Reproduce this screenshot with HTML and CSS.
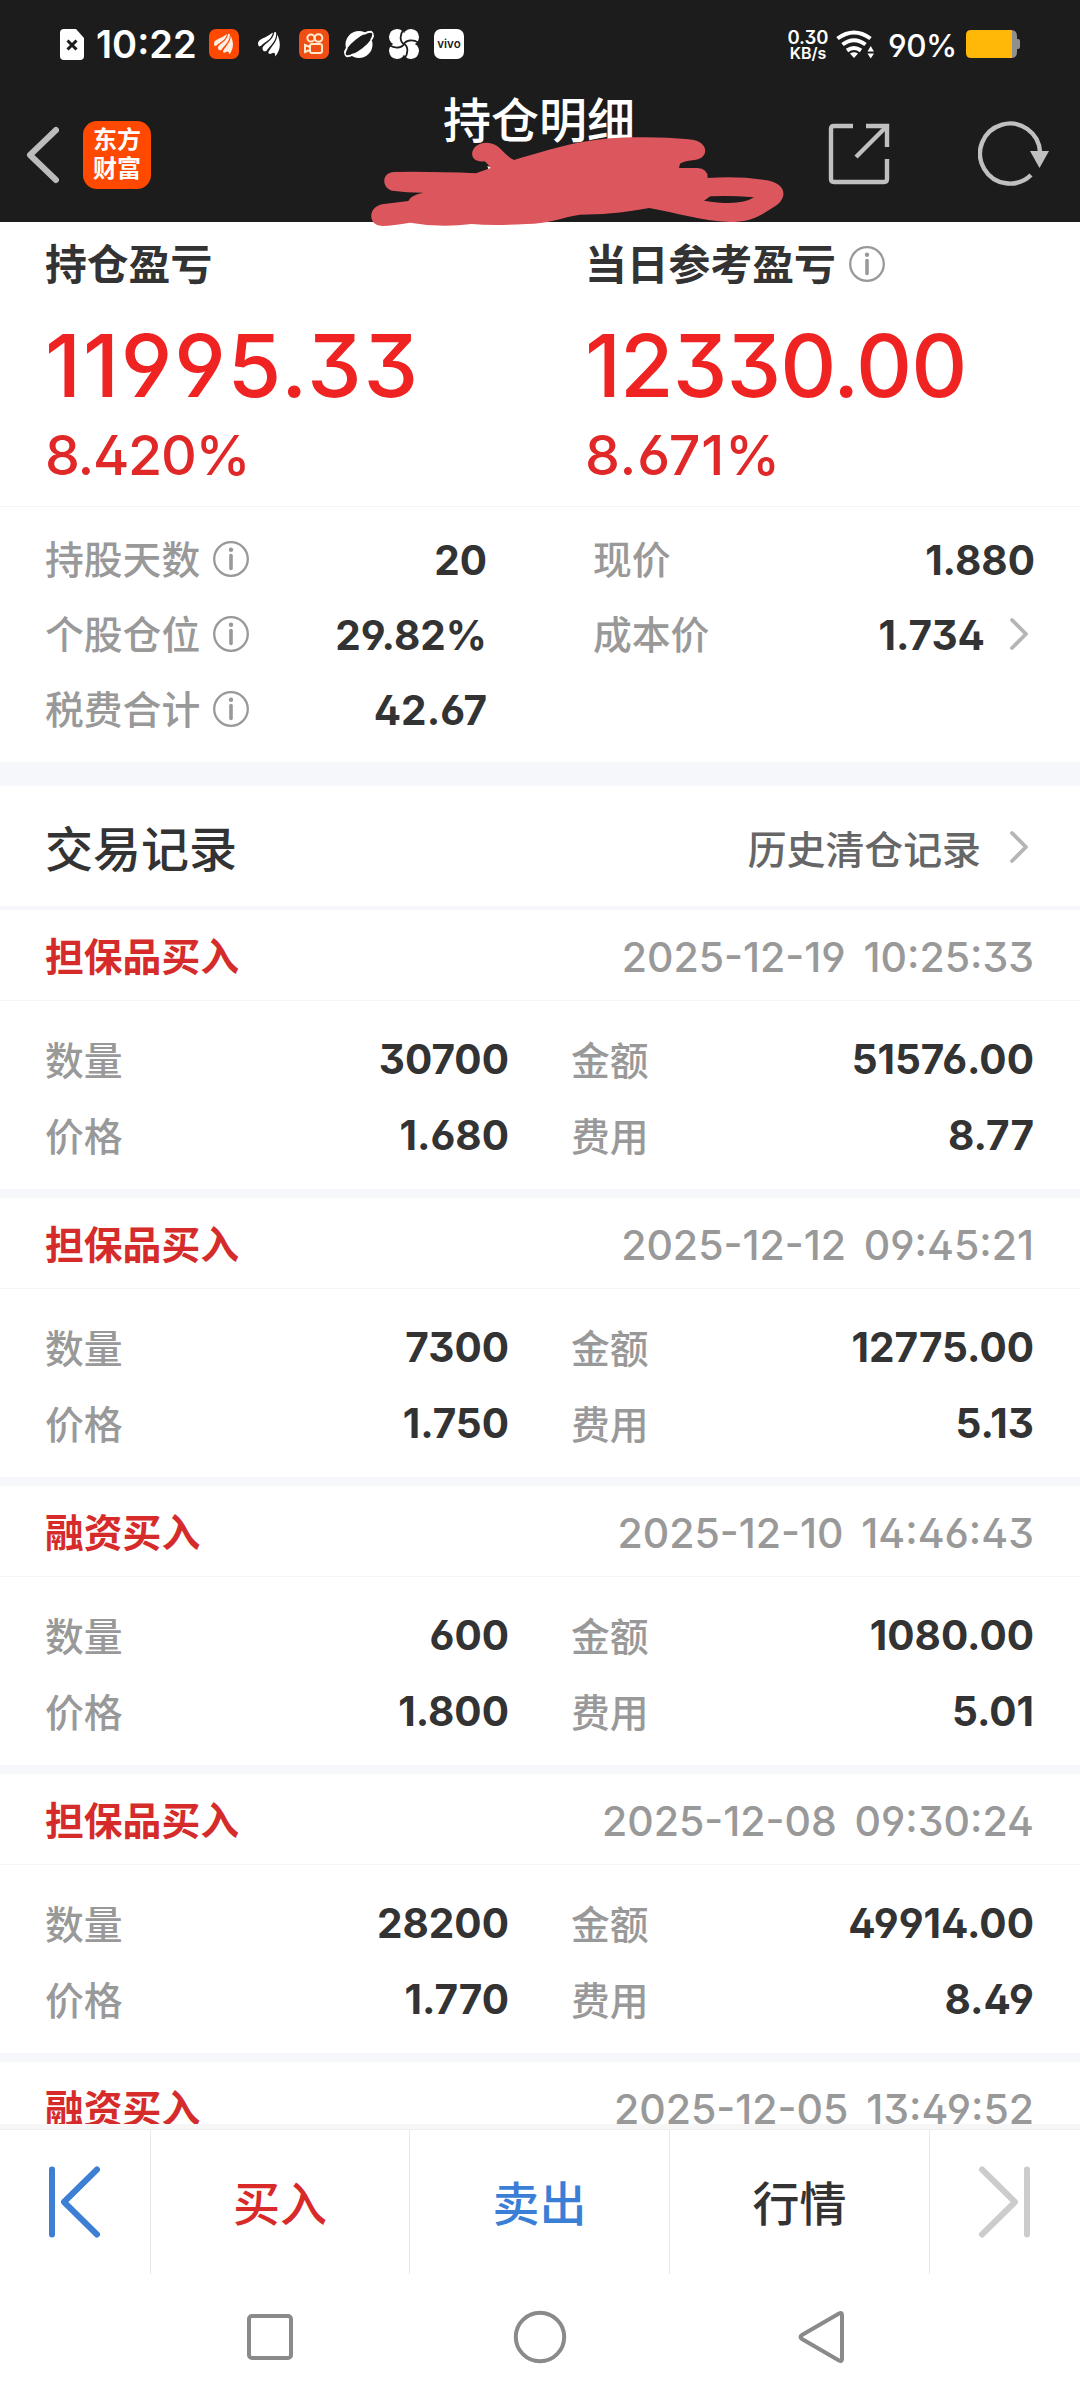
FILE: index.html
```html
<!DOCTYPE html>
<html lang="zh-CN">
<head>
<meta charset="utf-8">
<title>持仓明细</title>
<link rel="stylesheet" href="styles.css">
</head>
<body>
<svg class="defs" width="0" height="0">
  <symbol id="info" viewBox="0 0 36 36"><circle cx="18" cy="18" r="16.8" fill="none" stroke="#999" stroke-width="2.3"/><circle cx="18" cy="8.8" r="2.2" fill="#999"/><path d="M18 14.5V27.5" stroke="#999" stroke-width="3.6" stroke-linecap="round"/></symbol>
  <symbol id="chev" viewBox="0 0 20 34"><path d="M3 3L17 17L3 31" fill="none" stroke="#b5b5b5" stroke-width="3.8" stroke-linecap="round" stroke-linejoin="round"/></symbol>
  <symbol id="wing" viewBox="0 0 24 26"><path d="M0 12C1 7 8 7 14 2C15 1 16 1 15 3C12 10 8 10 4 14C1 17 0 15 0 12ZM5 16C9 11 15 10 17 1C18 0 19 1 19 2C19 11 12 15 9 20C6 22 4 19 5 16ZM11 21C15 14 20 11 20 3C23 9 25 18 18 26C18 22 17 21 14 23C12 24 10 23 11 21Z" fill="currentColor"/></symbol>
</svg>

<header class="top">
  <div class="status">
    <svg class="ic-sim" width="24" height="31" viewBox="0 0 24 31"><path d="M4 0H16L24 9V27Q24 31 20 31H4Q0 31 0 27V4Q0 0 4 0Z" fill="#fff"/><path d="M7.5 11.500L16.500 20.500M16.500 11.500L7.500 20.500" stroke="#1c1c1c" stroke-width="3"/></svg>
    <span class="clock">10:22</span>
    <div class="apps">
      <span class="app app-orange"><svg width="20" height="22"><use href="#wing"/></svg></span>
      <span class="app"><svg width="23" height="26"><use href="#wing"/></svg></span>
      <span class="app app-kuai"><svg width="20" height="22" viewBox="0 0 20 22" fill="none" stroke="#ffeacb" stroke-width="2"><circle cx="7" cy="5" r="3.600"/><circle cx="14.500" cy="5" r="3.800"/><rect x="6" y="11" width="12" height="9" rx="2"/><path d="M6 14L1 12V19L6 17"/></svg></span>
      <svg class="app" viewBox="0 0 30 30"><circle cx="15" cy="15.500" r="13.500" fill="#fff"/><ellipse cx="15" cy="15" rx="16.800" ry="5.500" transform="rotate(-38 15 15)" fill="#1c1c1c"/><path d="M3 19Q-1 25 2 27Q5 28 10 25M27 11Q31 5 28 3Q25 2 20 5" fill="none" stroke="#fff" stroke-width="2"/></svg>
      <svg class="app" viewBox="0 0 30 30"><g fill="#fff"><circle cx="8" cy="8" r="8"/><circle cx="22" cy="8" r="8"/><circle cx="8" cy="22" r="8"/><circle cx="22" cy="22" r="8"/><rect x="7" y="7" width="16" height="16"/></g><path d="M15 15C11 13 10 6 15 0M15 15C17 11 24 10 30 14M15 15C19 17 20 24 15 30M15 15C13 19 6 20 0 16" fill="none" stroke="#1c1c1c" stroke-width="1.800"/></svg>
      <span class="app app-vivo">vivo</span>
    </div>
    <div class="net"><span class="net-n">0.30</span><span class="net-u">KB/s</span></div>
    <svg class="ic-wifi" width="38" height="29" viewBox="0 0 38 29"><g fill="none" stroke="#fff" stroke-width="4"><path d="M1.500 8.500Q18 -3.500 34.500 8.500"/><path d="M6.500 14.500Q18 6 29.500 14.500"/><path d="M11 20.500Q18 15.500 25 20.500"/></g><path d="M14 23.500Q18 21 22 23.500L18 28Z" fill="#fff"/><path d="M31.500 21.500L34.700 16L38 21.500ZM31.500 23.500H38L34.700 28.500Z" fill="#fff"/></svg>
    <span class="pct">90%</span>
    <svg class="ic-bat" width="54" height="28" viewBox="0 0 54 28"><path d="M40 0H45Q51 0 51 6V9H52Q54 9 54 11V17Q54 19 52 19H51V22Q51 28 45 28H40Z" fill="#8f8f8f"/><path d="M5 0H46V28H5Q0 28 0 23V5Q0 0 5 0Z" fill="#ffb807"/></svg>
  </div>
  <div class="nav">
    <svg class="ic-back" width="34" height="58" viewBox="0 0 34 58"><path d="M31 4L5 29L31 54" fill="none" stroke="#bcbcbc" stroke-width="6" stroke-linecap="round" stroke-linejoin="round"/></svg>
    <div class="logo">东方<br>财富</div>
    <h1 class="title">持仓明细</h1>
    <svg class="ic-share" width="62" height="62" viewBox="0 0 62 62" fill="none" stroke="#c0c0c0" stroke-width="4.400"><path d="M25 3H6Q3 3 3 6V56Q3 59 6 59H56Q59 59 59 56V36"/><path d="M38 3H59V24"/><path d="M28 34L58 4"/></svg>
    <svg class="ic-refresh" width="72" height="66" viewBox="0 0 72 66"><path d="M62 31A30 30 0 1 0 53 54" fill="none" stroke="#c0c0c0" stroke-width="4.400"/><path d="M52 30H71L61.500 47Z" fill="#c0c0c0"/></svg>
  </div>
  <svg class="scribble" width="430" height="145" viewBox="0 0 1290 435"><path d="M382 228L398 233L386 240Z" fill="#fff"/><path fill-rule="evenodd" fill="#dc575d" d="M348 250L392 234Q384 222 374 214C320 222 326 158 380 158C418 158 428 192 462 210C580 176 670 144 820 142Q910 140 985 148C1050 152 1048 206 1004 210Q976 212 960 221L957 234H1012Q1044 236 1043 264Q1130 258 1210 269C1290 278 1280 332 1240 352C1190 386 1160 396 1110 396C1020 392 950 368 868 354C780 370 720 374 660 374C600 384 560 402 500 402Q400 408 335 402Q240 414 150 398Q100 406 66 408C20 406 24 346 72 342L145 333Q150 316 190 308Q140 308 96 302C62 290 66 246 104 246Q210 244 348 250ZM1051 319L1032 332Q1140 350 1182 322Q1110 316 1051 319Z"/></svg>
</header>

<section class="pnl">
  <div class="pnl-col">
    <div class="pnl-name">持仓盈亏</div>
    <div class="pnl-big pnl-total">11995.33</div>
    <div class="pnl-pct pnl-pct-total">8.420%</div>
  </div>
  <div class="pnl-col">
    <div class="pnl-name">当日参考盈亏<svg class="info"><use href="#info"/></svg></div>
    <div class="pnl-big">12330.00</div>
    <div class="pnl-pct">8.671%</div>
  </div>
</section>

<section class="stats">
  <div class="stats-col">
    <div class="row"><span class="lab">持股天数</span><svg class="info"><use href="#info"/></svg><span class="val">20</span></div>
    <div class="row"><span class="lab">个股仓位</span><svg class="info"><use href="#info"/></svg><span class="val">29.82%</span></div>
    <div class="row"><span class="lab">税费合计</span><svg class="info"><use href="#info"/></svg><span class="val">42.67</span></div>
  </div>
  <div class="stats-col">
    <div class="row"><span class="lab">现价</span><span class="val">1.880</span></div>
    <div class="row"><span class="lab">成本价</span><span class="val">1.734</span><svg class="chev"><use href="#chev"/></svg></div>
  </div>
</section>

<section class="list-head">
  <h2 class="list-title">交易记录</h2>
  <span class="more">历史清仓记录</span><svg class="chev"><use href="#chev"/></svg>
</section>

<main class="records">
  <article class="rec">
    <div class="rec-head"><b class="kind">担保品买入</b><time class="date">2025-12-19&nbsp; 10:25:33</time></div>
    <div class="grid"><span class="lab">数量</span><span class="val">30700</span><span class="lab">金额</span><span class="val">51576.00</span><span class="lab">价格</span><span class="val">1.680</span><span class="lab">费用</span><span class="val">8.77</span></div>
  </article>
  <article class="rec">
    <div class="rec-head"><b class="kind">担保品买入</b><time class="date">2025-12-12&nbsp; 09:45:21</time></div>
    <div class="grid"><span class="lab">数量</span><span class="val">7300</span><span class="lab">金额</span><span class="val">12775.00</span><span class="lab">价格</span><span class="val">1.750</span><span class="lab">费用</span><span class="val">5.13</span></div>
  </article>
  <article class="rec">
    <div class="rec-head"><b class="kind">融资买入</b><time class="date">2025-12-10&nbsp; 14:46:43</time></div>
    <div class="grid"><span class="lab">数量</span><span class="val">600</span><span class="lab">金额</span><span class="val">1080.00</span><span class="lab">价格</span><span class="val">1.800</span><span class="lab">费用</span><span class="val">5.01</span></div>
  </article>
  <article class="rec">
    <div class="rec-head"><b class="kind">担保品买入</b><time class="date">2025-12-08&nbsp; 09:30:24</time></div>
    <div class="grid"><span class="lab">数量</span><span class="val">28200</span><span class="lab">金额</span><span class="val">49914.00</span><span class="lab">价格</span><span class="val">1.770</span><span class="lab">费用</span><span class="val">8.49</span></div>
  </article>
  <article class="rec">
    <div class="rec-head"><b class="kind">融资买入</b><time class="date">2025-12-05&nbsp; 13:49:52</time></div>
  </article>
</main>

<footer class="bar">
  <div class="cell cell-icon"><svg width="54" height="72" viewBox="0 0 54 72" fill="none" stroke="#3d7fd4" stroke-width="6" stroke-linecap="round" stroke-linejoin="round"><path d="M4 3.500V68.500M49 3.500L16 36L49 68.500"/></svg></div>
  <div class="cell buy">买入</div>
  <div class="cell sell">卖出</div>
  <div class="cell quote">行情</div>
  <div class="cell cell-icon"><svg width="54" height="72" viewBox="0 0 54 72" fill="none" stroke="#cccccc" stroke-width="6" stroke-linecap="round" stroke-linejoin="round"><path d="M49 3.500V68.500M4 3.500L37 36L4 68.500"/></svg></div>
</footer>
<div class="sysnav">
  <svg width="54" height="54" viewBox="0 0 54 54"><rect x="6" y="6" width="42" height="42" rx="3"/></svg>
  <svg width="54" height="54" viewBox="0 0 54 54"><circle cx="27" cy="27" r="24.200"/></svg>
  <svg class="sys-back" width="54" height="54" viewBox="0 0 54 54"><path d="M47 5V49Q47 52 44 50.500L7 29Q4 27 7 25L44 3.500Q47 2 47 5Z"/></svg>
</div>
</body>
</html>
```
FILE: styles.css
```css
* { box-sizing: border-box; }
body { margin: 0; width: 1080px; height: 2400px; overflow: hidden; background: #fff; color: #333; font-family: "Noto Sans CJK SC", sans-serif; display: flex; flex-direction: column; }
svg { display: block; flex: none; }
.defs { position: absolute; }
h1, h2 { margin: 0; font-weight: 500; }
.clock, .pct, .net, .pnl-big, .pnl-pct, .val, .date, .app-vivo { font-family: Inter, "Noto Sans CJK SC", sans-serif; font-feature-settings: "ss01", "cv03", "cv04"; white-space: nowrap; }

.top { position: relative; height: 222px; background: #1c1c1c; color: #fff; flex: none; }
.status { height: 88px; display: flex; align-items: center; padding-left: 60px; }
.clock { width: 100px; margin-left: 12px; font-size: 38px; font-weight: 600; }
.apps { display: flex; gap: 15px; margin-left: 13px; width: 255px; }
.app { width: 30px; height: 30px; flex: none; display: flex; align-items: center; justify-content: center; border-radius: 7px; }
.app-orange { background: #ff4800; color: #ffeee2; }
.app-kuai { background: #f04e14; }
.app-vivo { background: #fff; color: #1c1c1c; font-size: 11.5px; font-weight: 600; }
.net { margin-left: 323px; width: 42px; display: flex; flex-direction: column; align-items: center; font-weight: 600; padding-top: 2px; }
.net-n { font-size: 18.5px; line-height: 16px; }
.net-u { font-size: 16px; line-height: 17px; }
.ic-wifi { margin-left: 7px; }
.pct { width: 66px; margin-left: 14px; font-size: 31.5px; font-weight: 500; padding-top: 3px; letter-spacing: -0.5px; }
.ic-bat { margin-left: 12px; }
.nav { height: 134px; display: flex; align-items: flex-start; padding-left: 25px; }
.ic-back { margin-top: 38px; }
.logo { width: 68px; height: 68px; margin: 33px 0 0 24px; padding-top: 3px; border-radius: 14px; background: #ff4800; text-align: center; font-size: 24px; line-height: 28.5px; font-weight: 700; }
.title { margin: -1px 0 0 292px; width: 194px; font-size: 48px; line-height: 60px; white-space: nowrap; }
.ic-share { margin: 35px 0 0 191px; }
.ic-refresh { margin: 33px 0 0 88px; }
.scribble { position: absolute; left: 360px; top: 90px; }

.pnl { height: 285px; flex: none; border-bottom: 1px solid #f5f5f5; display: grid; grid-template-columns: 1fr 1fr; }
.pnl-col { padding: 12px 0 0 45px; }
.pnl-name { height: 56px; font-size: 41.800px; line-height: 56px; font-weight: 600; display: flex; align-items: center; white-space: nowrap; }
.pnl-name .info { margin: 4px 0 0 13px; }
.pnl-big { margin-top: 24px; font-size: 87px; line-height: 104px; font-weight: 500; color: #ef2322; letter-spacing: -1px; }
.pnl-total { letter-spacing: 1.800px; }
.pnl-pct { margin-top: 5px; font-size: 55.500px; line-height: 64px; font-weight: 500; color: #e02828; letter-spacing: 0.800px; }
.pnl-pct-total { letter-spacing: -1.300px; }
.info { width: 36px; height: 36px; }
.chev { width: 20px; height: 34px; }

.stats { height: 279px; flex: none; padding: 14px 45px 0 45px; border-bottom: 24px solid #f6f7fa; display: grid; grid-template-columns: 442px 442px; column-gap: 106px; }
.row { height: 75px; display: flex; align-items: center; }
.row .info { margin-left: 13px; }
.row .chev { margin: 0 6px 0 24px; }
.lab { font-size: 38.800px; line-height: 60px; padding-bottom: 3px; font-weight: 500; color: #999; white-space: nowrap; }
.val { margin-left: auto; padding-top: 4px; font-size: 40.500px; line-height: 60px; font-weight: 650; text-align: right; }

.list-head { height: 124px; flex: none; border-bottom: 4px solid #f6f7fa; padding: 2px 51px 0 45px; display: flex; align-items: center; }
.list-title { font-size: 48px; padding-bottom: 3px; }
.more { margin-left: auto; font-size: 38.900px; font-weight: 500; color: #666; }
.list-head .chev { margin-left: 28px; }

.records { height: 1214px; flex: none; overflow: hidden; }
.rec { height: 288px; border-bottom: 9px solid #f6f7fa; }
.rec-head { height: 91px; border-bottom: 1px solid #f5f5f7; padding: 0 46px 0 45px; display: flex; align-items: center; justify-content: space-between; }
.kind { font-size: 38.800px; color: #d62b2b; font-weight: 700; padding-bottom: 2px; }
.date { font-size: 41px; font-weight: 500; color: #999; padding-top: 4px; word-spacing: -2px; }
.grid { padding: 20px 46px 0 45px; display: grid; grid-template-columns: 90px 374px 152px 373px; grid-auto-rows: 76px; align-items: center; }
.grid .val { padding-top: 2px; }
.grid .lab:nth-child(4n+3) { padding-left: 62px; }

.bar { height: 150px; flex: none; border-top: 5px solid #f6f6f6; display: grid; grid-template-columns: 151px 259px 260px 260px 150px; }
.cell { border-top: 1px solid #eee; border-right: 1px solid #e8e8e8; padding-bottom: 3px; display: flex; align-items: center; justify-content: center; font-size: 47px; font-weight: 500; }
.cell-icon { padding-bottom: 0; }
.cell:last-child { border-right: 0; }
.buy { color: #d92a2a; }
.sell { color: #3a7fd5; }
.sysnav { flex: 1; display: flex; gap: 216px; padding: 36px 0 0 243px; }
.sysnav svg { fill: none; stroke: #8a8a8a; stroke-width: 4; }
.sysnav .sys-back { margin-left: 12px; }
```
